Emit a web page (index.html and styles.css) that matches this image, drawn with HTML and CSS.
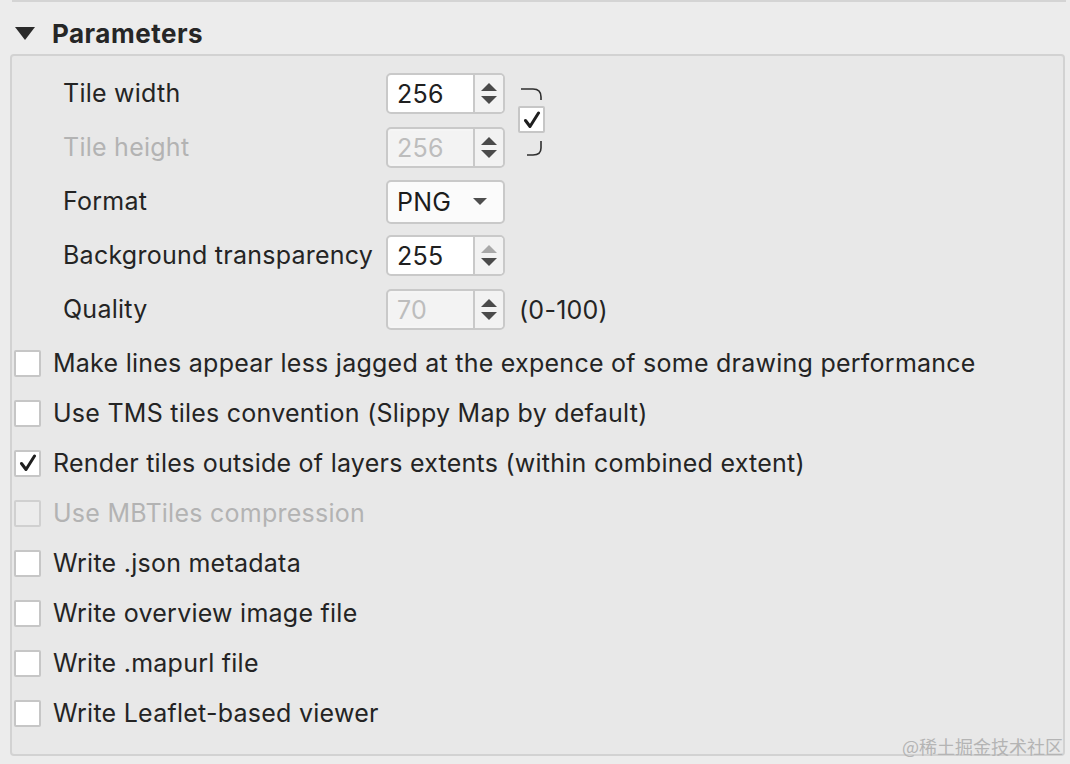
FILE: index.html
```html
<!DOCTYPE html>
<html>
<head>
<meta charset="utf-8">
<link rel="stylesheet" href="styles.css">
</head>
<body>
<div class="page">
  <div class="top-line"></div>
  <div class="header">
    <svg class="disclosure" width="20" height="13" viewBox="0 0 20 13"><path d="M0 0 H20 L10 13 Z" fill="#2a2a2a"/></svg>
    <span class="title">Parameters</span>
  </div>
  <div class="group">
    <div class="form">
      <div class="label">Tile width</div>
      <div class="spin"><span class="val">256</span><span class="arrows"><i class="up"></i><i class="down"></i></span></div>
      <div class="link">
        <svg width="30" height="72" viewBox="0 0 30 72">
          <path d="M3 3 H15 Q23 3 23 11 V14" fill="none" stroke="#2e2e2e" stroke-width="1.6"/>
          <path d="M23 55 V62 Q23 69 15 69 H9" fill="none" stroke="#2e2e2e" stroke-width="1.6"/>
        </svg>
        <span class="cb linkcb"><svg width="18" height="18" viewBox="0 0 18 18"><path d="M2.5 9.5 L7 15.5 L15.5 2" fill="none" stroke="#1e1e1e" stroke-width="3" stroke-linecap="round" stroke-linejoin="round"/></svg></span>
      </div>

      <div class="label disabled">Tile height</div>
      <div class="spin off"><span class="val">256</span><span class="arrows"><i class="up"></i><i class="down"></i></span></div>

      <div class="label">Format</div>
      <div class="combo"><span class="val">PNG</span><i class="caret"></i></div>

      <div class="label">Background transparency</div>
      <div class="spin"><span class="val">255</span><span class="arrows"><i class="up dim"></i><i class="down"></i></span></div>

      <div class="label">Quality</div>
      <div class="spin off"><span class="val">70</span><span class="arrows"><i class="up"></i><i class="down"></i></span></div>
      <div class="range">(0-100)</div>
    </div>

    <div class="checks">
      <div class="row"><span class="cb"></span><span>Make lines appear less jagged at the expence of some drawing performance</span></div>
      <div class="row"><span class="cb"></span><span>Use TMS tiles convention (Slippy Map by default)</span></div>
      <div class="row"><span class="cb"><svg width="18" height="18" viewBox="0 0 18 18"><path d="M2.5 9.5 L7 15.5 L15.5 2" fill="none" stroke="#1e1e1e" stroke-width="3" stroke-linecap="round" stroke-linejoin="round"/></svg></span><span>Render tiles outside of layers extents (within combined extent)</span></div>
      <div class="row disabled"><span class="cb off"></span><span>Use MBTiles compression</span></div>
      <div class="row"><span class="cb"></span><span>Write .json metadata</span></div>
      <div class="row"><span class="cb"></span><span>Write overview image file</span></div>
      <div class="row"><span class="cb"></span><span>Write .mapurl file</span></div>
      <div class="row"><span class="cb"></span><span>Write Leaflet-based viewer</span></div>
    </div>
  </div>
  <div class="watermark">@稀土掘金技术社区</div>
</div>
</body>
</html>
```
FILE: styles.css
```css
html, body {
  margin: 0;
  padding: 0;
  background: #ececec;
}
body {
  font-family: Inter, "Noto Sans", sans-serif;
  color: #242424;
  font-size: 25px;
  letter-spacing: 0.25px;
  width: 1070px;
  height: 764px;
  overflow: hidden;
}
.page {
  position: relative;
  width: 1070px;
  height: 764px;
}
.top-line {
  margin-left: 12px;
  width: 1054px;
  height: 2px;
  background: #d4d4d4;
}
.header {
  box-sizing: border-box;
  display: flex;
  align-items: center;
  height: 52px;
  padding: 10px 0 0 15px;
  gap: 17px;
}
.title {
  font-weight: 700;
  font-size: 26px;
  letter-spacing: 0.5px;
  color: #262626;
}
.group {
  margin-left: 10px;
  width: 1051px;
  height: 698px;
  border: 2px solid #d2d2d2;
  border-radius: 4px;
  background: #e8e8e8;
}
.form {
  display: grid;
  grid-template-columns: 323px 119px auto;
  grid-auto-rows: 41px;
  row-gap: 13px;
  align-items: center;
  justify-items: start;
  padding: 17px 0 0 51px;
}
.label {
  grid-column: 1;
  line-height: 41px;
}
.disabled {
  color: #b3b3b3;
}
.spin, .combo {
  grid-column: 2;
  box-sizing: border-box;
  width: 119px;
  height: 41px;
  border: 2px solid #c9c9c9;
  border-radius: 5px;
  background: #ffffff;
  display: flex;
  align-items: stretch;
}
.spin .val {
  flex: 1;
  padding-left: 9px;
  line-height: 38px;
  color: #202020;
}
.spin.off .val {
  color: #bdbdbd;
  background: #f3f3f3;
  margin: 2px 0 2px 2px;
  padding-left: 7px;
  line-height: 34px;
}
.spin.off {
  background: #f5f5f5;
}
.arrows {
  flex: none;
  width: 28px;
  border-left: 2px solid #c9c9c9;
  background: #f2f2f2;
  border-radius: 0 4px 4px 0;
  display: flex;
  flex-direction: column;
  align-items: center;
  justify-content: center;
  gap: 5px;
}
.arrows i {
  display: block;
  width: 0;
  height: 0;
  border-left: 8px solid transparent;
  border-right: 8px solid transparent;
}
.arrows .up {
  border-bottom: 8px solid #4a4a4a;
}
.arrows .up.dim {
  border-bottom-color: #a8a8a8;
}
.arrows .down {
  border-top: 8px solid #4a4a4a;
}
.combo {
  height: 44px;
  background: #fbfbfb;
  align-items: center;
  justify-content: space-between;
  padding: 0 16px 0 9px;
}
.combo .val {
  color: #1c1c1c;
}
.caret {
  display: block;
  width: 0;
  height: 0;
  border-left: 7px solid transparent;
  border-right: 7px solid transparent;
  border-top: 7px solid #4e4e4e;
}
.link {
  grid-column: 3;
  grid-row: 1 / span 2;
  align-self: start;
  position: relative;
  margin-left: 13px;
  margin-top: 13px;
  width: 30px;
  height: 72px;
}
.link svg:first-child {
  display: block;
}
.linkcb {
  position: absolute;
  left: 0;
  top: 20px;
}
.range {
  grid-column: 3;
  padding-left: 14px;
}
.checks {
  padding: 8px 0 0 2px;
  display: flex;
  flex-direction: column;
}
.row {
  display: flex;
  align-items: center;
  height: 50px;
  gap: 12px;
}
.cb {
  box-sizing: border-box;
  width: 27px;
  height: 27px;
  border: 2px solid #c6c6c6;
  border-radius: 2px;
  background: #ffffff;
  display: flex;
  align-items: center;
  justify-content: center;
  flex: none;
}
.cb.off {
  background: #ececec;
  border-color: #d0d0d0;
}
.watermark {
  position: absolute;
  right: 7px;
  bottom: 5px;
  font-family: "Noto Sans CJK SC", sans-serif;
  font-size: 18px;
  letter-spacing: 0;
  color: #b4b4b4;
}
```
